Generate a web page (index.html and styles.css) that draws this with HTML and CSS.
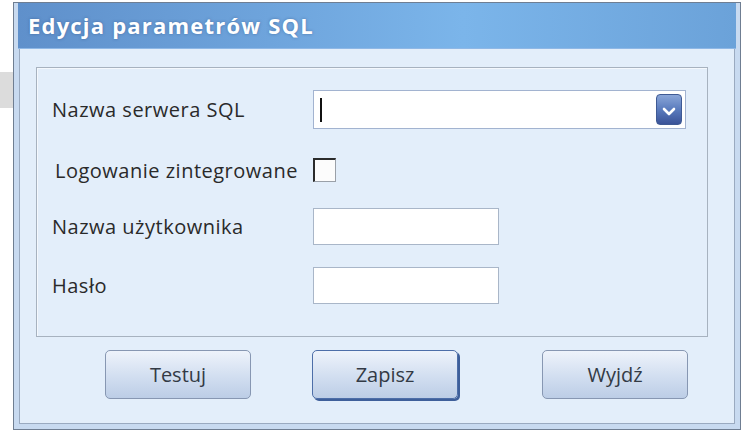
FILE: index.html
```html
<!DOCTYPE html>
<html lang="pl">
<head>
	<meta charset="utf-8">
	<title>Edycja parametrów SQL</title>
	<link rel="stylesheet" href="styles.css">
</head>
<body>
	<div class="desk">
		<div class="behind"><div class="behind-bar"></div></div>
		<div class="window">
			<div class="titlebar">Edycja parametrów SQL</div>
			<div class="client">
				<div class="group">
					<div class="row row-server">
						<label class="caption">Nazwa serwera SQL</label>
						<div class="combo">
							<span class="caret"></span>
							<span class="drop">
								<svg width="14" height="10" viewBox="0 0 14 10"><path d="M2 2 L7 7 L12 2" fill="none" stroke="#fff" stroke-width="2.6" stroke-linecap="round" stroke-linejoin="round"/></svg>
							</span>
						</div>
					</div>
					<div class="row row-check">
						<label class="caption caption-check">Logowanie zintegrowane</label>
						<span class="check"></span>
					</div>
					<div class="row row-user">
						<label class="caption">Nazwa użytkownika</label>
						<input class="field" type="text">
					</div>
					<div class="row row-pass">
						<label class="caption">Hasło</label>
						<input class="field" type="password">
					</div>
				</div>
				<div class="buttons">
					<button class="btn">Testuj</button>
					<button class="btn btn-default">Zapisz</button>
					<button class="btn btn-exit">Wyjdź</button>
				</div>
			</div>
		</div>
	</div>
</body>
</html>
```

FILE: styles.css
```css
body {
	margin: 0;
	background: #fff;
	font-family: "Open Sans", "Noto Sans", sans-serif;
}
.desk {
	display: flex;
	height: 431px;
}
.behind {
	width: 13px;
	flex: none;
}
.behind-bar {
	margin-top: 72px;
	height: 36px;
	background: #dcdcdc;
}
.window {
	margin-top: 2px;
	width: 728px;
	height: 428px;
	box-sizing: border-box;
	border: 1px solid #6f7e92;
	background: #c8daf0;
	padding: 0 5px 5px 5px;
	display: flex;
	flex-direction: column;
}
.titlebar {
	height: 45px;
	margin: 0 -1px;
	padding-left: 10px;
	line-height: 44px;
	font-size: 22px;
	font-weight: 700;
	color: #fff;
	letter-spacing: 1.2px;
	text-shadow: 0 0 3px rgba(40, 70, 120, 0.5);
	background: linear-gradient(to right, #5f90cb 0%, #6ea4dc 35%, #7bb5ea 62%, #6ba2d9 100%);
	border-bottom: 1px solid #8fb8e6;
}
.client {
	flex: 1;
	background: #e3eefa;
	border: 1px solid #9aaac0;
	border-top: none;
	padding: 18px 0 0 16px;
}
.group {
	width: 672px;
	height: 270px;
	box-sizing: border-box;
	border: 1px solid #a7b2bf;
	box-shadow: inset 1px 1px 0 #f4f8fd;
	padding: 22px 0 0 15px;
}
.row {
	display: flex;
	align-items: center;
}
.caption {
	width: 261px;
	flex: none;
	font-size: 20px;
	letter-spacing: 0.5px;
	color: #2a2a2a;
}
.caption-check {
	padding-left: 3px;
	width: 258px;
}
.row-server {
	height: 39px;
}
.row-check {
	height: 38px;
	margin-top: 22px;
}
.row-user {
	height: 37px;
	margin-top: 19px;
}
.row-pass {
	height: 37px;
	margin-top: 22px;
}
.combo {
	width: 373px;
	height: 39px;
	box-sizing: border-box;
	border: 1px solid #a2b3d0;
	background: #fff;
	display: flex;
	align-items: center;
	justify-content: space-between;
	padding: 0 3px 0 6px;
}
.caret {
	width: 2px;
	height: 24px;
	background: #111;
}
.drop {
	width: 26px;
	height: 31px;
	box-sizing: border-box;
	border-radius: 4px;
	border: 1px solid #3f5a94;
	background: linear-gradient(#8aa6d8, #5a7bbd 50%, #3a5398);
	display: flex;
	align-items: center;
	justify-content: center;
	padding-top: 4px;
}
.check {
	width: 23px;
	height: 24px;
	box-sizing: border-box;
	border-top: 2px solid #2b2b2b;
	border-left: 2px solid #2b2b2b;
	border-right: 1px solid #9aa0a8;
	border-bottom: 1px solid #9aa0a8;
	background: #fcfcfc;
}
.field {
	width: 186px;
	height: 37px;
	box-sizing: border-box;
	margin: 0;
	border: 1px solid #a9b6c8;
	background: #fff;
	outline: none;
}
.buttons {
	display: flex;
	padding: 13px 0 0 69px;
}
.btn {
	flex: none;
	width: 146px;
	height: 49px;
	margin: 0;
	border: 1px solid #8797b2;
	border-radius: 5px;
	background: linear-gradient(#eef3fb, #d4e0f1 50%, #bccde6);
	font-family: "Open Sans", "Noto Sans", sans-serif;
	font-size: 20px;
	color: #333a45;
}
.btn-default {
	margin-left: 61px;
	border-color: #4d6ea8;
	box-shadow: 2px 2px 0 #3e5f9a;
}
.btn-exit {
	margin-left: 84px;
}
```
